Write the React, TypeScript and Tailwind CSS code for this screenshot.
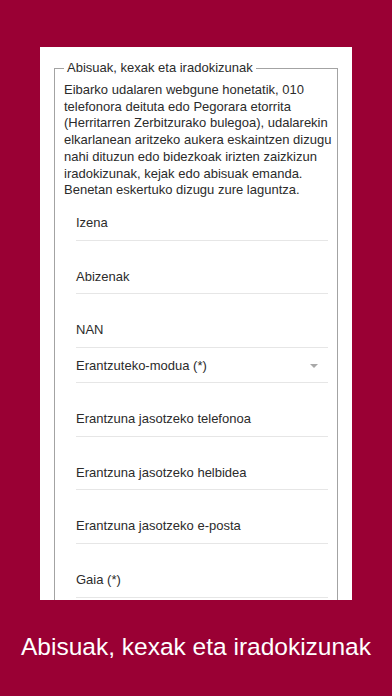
const fields = [
  "Izena",
  "Abizenak",
  "NAN",
];

const fieldsAfter = [
  "Erantzuna jasotzeko telefonoa",
  "Erantzuna jasotzeko helbidea",
  "Erantzuna jasotzeko e-posta",
  "Gaia (*)",
];

const TextField = ({ label }: { label: string }) => (
  <div className="ml-[12px] pt-[26px] pb-[6.7px] border-b border-[#e6e6e6]">
    <p className="text-[13px] leading-[20px] text-[#2b2b2b]">{label}</p>
  </div>
);

export default function App() {
  return (
    <div
      className="w-[392px] h-[696px] bg-[#9a0034] flex flex-col overflow-hidden"
      style={{ fontFamily: '"Liberation Sans", Arial, sans-serif' }}
    >
      {/* CARD */}
      <div className="ml-[40px] mt-[47px] w-[312px] h-[553px] bg-white overflow-hidden px-[14px] pt-[14px]">
        <fieldset className="border border-[#a3a3a3] pl-[9px] pr-[9px] pt-[7px] pb-4">
          <legend className="px-[3px] text-[13px] leading-[14px] text-[#2b2b2b]">
            Abisuak, kexak eta iradokizunak
          </legend>

          <p className="text-[13px] leading-[16.7px] text-[#2b2b2b] -mr-[8px]">
            Eibarko udalaren webgune honetatik, 010 telefonora deituta edo
            Pegorara etorrita (Herritarren Zerbitzurako bulegoa), udalarekin
            elkarlanean aritzeko aukera eskaintzen dizugu nahi dituzun edo
            bidezkoak irizten zaizkizun iradokizunak, kejak edo abisuak emanda.
            Benetan eskertuko dizugu zure laguntza.
          </p>

          <div className="-mt-[12px]">
            {fields.map((f) => (
              <TextField key={f} label={f} />
            ))}

            {/* SELECT */}
            <div className="ml-[12px] pt-[8px] pb-[6px] border-b border-[#e6e6e6] flex items-center justify-between">
              <p className="text-[13px] leading-[20px] text-[#2b2b2b]">
                Erantzuteko-modua (*)
              </p>
              <svg width="10" height="6" viewBox="0 0 10 6" className="mr-[9px]">
                <path d="M1 1 L5 5 L9 1 Z" fill="#a8a8a8" />
              </svg>
            </div>

            {fieldsAfter.map((f) => (
              <TextField key={f} label={f} />
            ))}
          </div>
        </fieldset>
      </div>

      {/* CAPTION */}
      <div className="flex-1 flex items-center justify-center pb-[2px]">
        <h1 className="text-[24.5px] text-white leading-[30px]">
          Abisuak, kexak eta iradokizunak
        </h1>
      </div>
    </div>
  );
}
